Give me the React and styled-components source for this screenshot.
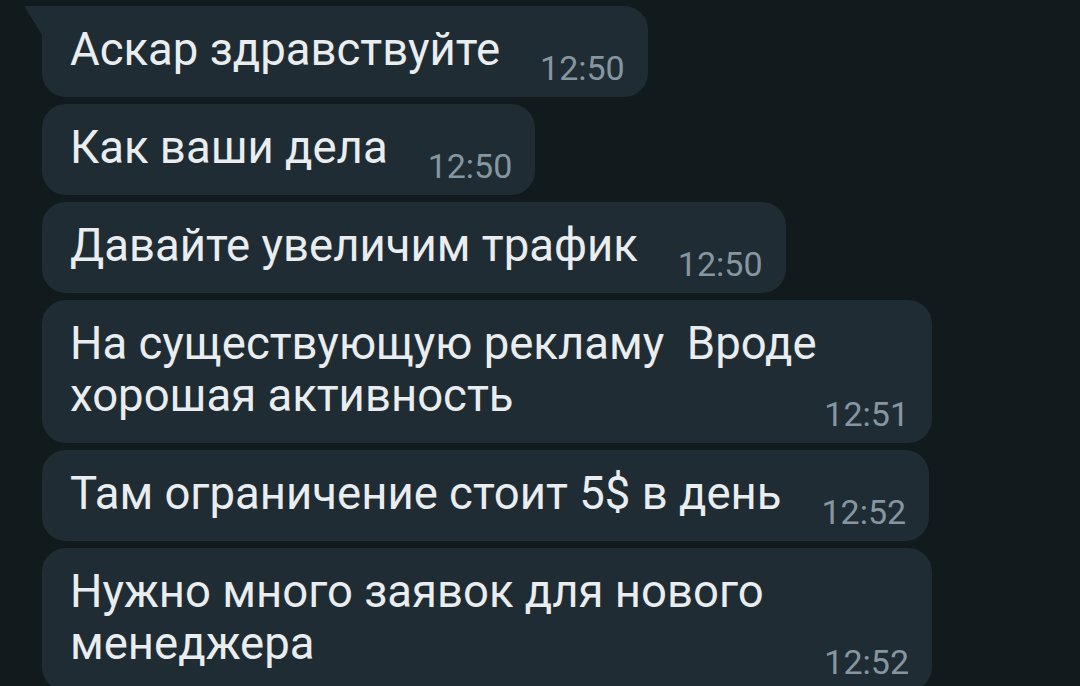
import styled, { createGlobalStyle } from 'styled-components';

const GlobalStyle = createGlobalStyle`
  html, body {
    margin: 0;
    padding: 0;
    background: #111b1e;
    overflow: hidden;
  }
`;

const Chat = styled.main`
  height: 686px;
  display: flex;
  flex-direction: column;
  align-items: flex-start;
  gap: 7px;
  padding: 6px 0 0 42px;
  box-sizing: border-box;
  font-family: Roboto, "Noto Sans", sans-serif;
`;

const Bubble = styled.div`
  position: relative;
  display: flex;
  align-items: flex-end;
  justify-content: space-between;
  gap: ${(p) => (p.$wide ? '0' : '40px')};
  box-sizing: border-box;
  width: ${(p) => (p.$wide ? '890px' : 'auto')};
  padding: 18px 23px 21px 28px;
  background: #202c33;
  border-radius: 24px;
  ${(p) => p.$first && 'border-top-left-radius: 0;'}
  flex-shrink: 0;
`;

const Tail = styled.svg`
  position: absolute;
  left: -18px;
  top: 0;
  width: 18px;
  height: 30px;
`;

const Text = styled.p`
  margin: 0;
  color: #e9edef;
  font-size: 45.5px;
  line-height: 52px;
  white-space: pre;
`;

const Time = styled.span`
  color: #8696a0;
  font-size: 34px;
  line-height: 32px;
  margin-bottom: -8px;
  white-space: nowrap;
`;

const messages = [
  { lines: ['Аскар здравствуйте'], time: '12:50', first: true },
  { lines: ['Как ваши дела'], time: '12:50' },
  { lines: ['Давайте увеличим трафик'], time: '12:50' },
  { lines: ['На существующую рекламу  Вроде', 'хорошая активность'], time: '12:51', wide: true },
  { lines: ['Там ограничение стоит 5$ в день'], time: '12:52' },
  { lines: ['Нужно много заявок для нового', 'менеджера'], time: '12:52', wide: true },
];

export default function App() {
  return (
    <>
      <GlobalStyle />
      <Chat>
        {messages.map((m, i) => (
          <Bubble key={i} $first={m.first} $wide={m.wide}>
            {m.first && (
              <Tail viewBox="0 0 18 30">
                <path d="M18 0 H3 Q0 0 1.6 2.6 L18 29 Z" fill="#202c33" />
              </Tail>
            )}
            <Text>{m.lines.join('\n')}</Text>
            <Time>{m.time}</Time>
          </Bubble>
        ))}
      </Chat>
    </>
  );
}
